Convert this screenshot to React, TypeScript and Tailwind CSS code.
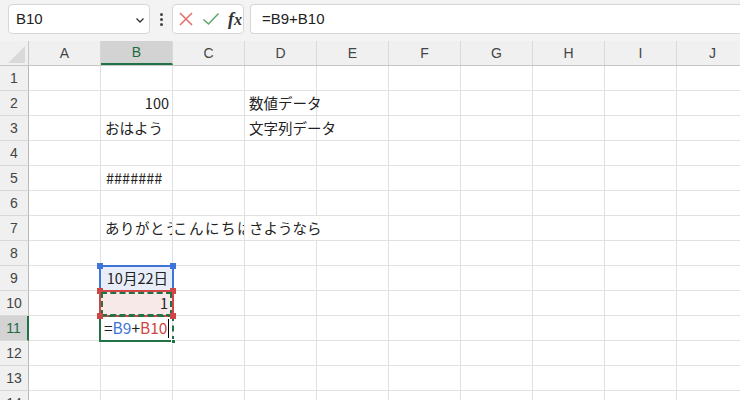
import React from "react";

const COLS = ["A", "B", "C", "D", "E", "F", "G", "H", "I", "J"];
const ROWS = Array.from({ length: 14 }, (_, i) => i + 1);

const cellFont = { fontFamily: '"Noto Sans CJK JP", "Noto Sans", sans-serif' };

function isOverflow(r: number, c: string) {
  return c === "D" && (r === 2 || r === 3 || r === 7);
}

function cellContent(r: number, c: string): React.ReactNode {
  if (r === 2 && c === "B") return <div className="w-full text-right pr-[3px]">100</div>;
  if (r === 2 && c === "D") return <div className="pl-[4px] whitespace-nowrap relative z-10">数値データ</div>;
  if (r === 3 && c === "B") return <div className="pl-[4px] whitespace-nowrap">おはよう</div>;
  if (r === 3 && c === "D") return <div className="pl-[4px] whitespace-nowrap relative z-10">文字列データ</div>;
  if (r === 5 && c === "B") return <div className="pl-[5px] whitespace-nowrap">#######</div>;
  if (r === 7 && c === "B") return <div className="pl-[4px] whitespace-nowrap overflow-hidden w-full tracking-[0.5px]">ありがとう</div>;
  if (r === 7 && c === "C") return <div className="whitespace-nowrap overflow-hidden w-full tracking-[1.5px]">こんにちは</div>;
  if (r === 7 && c === "D")
    return (
      <div className="pl-[4px] pr-[2px] whitespace-nowrap relative z-10 bg-white leading-[24px]">さようなら</div>
    );
  if (r === 9 && c === "B") return <div className="w-full text-right pr-[4px] whitespace-nowrap">10月22日</div>;
  if (r === 10 && c === "B") return <div className="w-full text-right pr-[4px]">1</div>;
  if (r === 11 && c === "B")
    return (
      <div className="pl-[3px] whitespace-nowrap flex items-center text-[15.5px]">
        <span className="text-[#222]">=</span>
        <span className="text-[#3f74d8]">B9</span>
        <span className="text-[#222]">+</span>
        <span className="text-[#d04545]">B10</span>
        <span className="inline-block w-[1px] h-[19px] bg-black ml-[1px]" />
      </div>
    );
  return null;
}

function cellBg(r: number, c: string) {
  if (r === 9 && c === "B") return "bg-[#e8eef9]";
  if (r === 10 && c === "B") return "bg-[#f8e9e9]";
  return "bg-white";
}

export default function App() {
  return (
    <div className="relative w-[740px] h-[400px] overflow-hidden bg-white" style={{ fontFamily: '"Liberation Sans", "Noto Sans CJK JP", sans-serif' }}>
      {/* Formula bar */}
      <div className="h-[41px] bg-[#f3f3f3] flex items-start pt-[4px] pl-[8px]">
        <div className="w-[142px] h-[30px] bg-white border border-[#d6d6d6] rounded-[4px] flex items-center justify-between pl-[7px] pr-[3px]">
          <span className="text-[15px] text-[#222]">B10</span>
          <svg width="12" height="12" viewBox="0 0 12 12" className="mt-[1px]">
            <path d="M2.5 4.5 L6 8 L9.5 4.5" fill="none" stroke="#333" strokeWidth="1.3" />
          </svg>
        </div>
        <div className="w-[22px] h-[30px] flex flex-col items-center justify-center gap-[2px]">
          <span className="w-[3px] h-[3px] bg-[#444] rounded-full" />
          <span className="w-[3px] h-[3px] bg-[#444] rounded-full" />
          <span className="w-[3px] h-[3px] bg-[#444] rounded-full" />
        </div>
        <div className="w-[72px] h-[30px] bg-white border border-[#d6d6d6] rounded-[4px] flex items-center pl-[5px] gap-[8px]">
          <svg width="16" height="16" viewBox="0 0 16 16">
            <path d="M2 2 L14 14 M14 2 L2 14" stroke="#e36b6b" strokeWidth="1.5" fill="none" />
          </svg>
          <svg width="18" height="16" viewBox="0 0 18 16">
            <path d="M1.5 8.5 L6.5 13 L16.5 2.5" stroke="#5aa86a" strokeWidth="1.5" fill="none" />
          </svg>
          <span className="text-[18px] italic text-[#333] leading-none" style={{ fontFamily: '"Liberation Serif", "DejaVu Serif", serif' }}>
            <span className="font-semibold">f</span><span className="text-[16px] font-semibold">x</span>
          </span>
        </div>
        <div className="ml-[6px] flex-1 h-[30px] bg-white border border-[#d6d6d6] rounded-l-[4px] border-r-0 flex items-center pl-[11px]">
          <span className="text-[15px] text-[#222]">=B9+B10</span>
        </div>
      </div>

      {/* Column headers */}
      <div className="flex h-[25px] bg-[#f0f0f0] border-b border-[#c6c6c6]">
        <div className="w-[29px] shrink-0 relative border-r border-[#c6c6c6]">
          <div className="absolute right-[3px] bottom-[2px] w-0 h-0 border-l-[17px] border-l-transparent border-b-[17px] border-b-[#d9d9d9]" />
        </div>
        {COLS.map((c) => (
          <div
            key={c}
            className={
              "w-[72px] shrink-0 flex items-center justify-center text-[14px] border-r border-[#d8d8d8] " +
              (c === "B" ? "bg-[#d3d3d3] text-[#1e6b40] border-b-2 border-b-[#217346]" : "text-[#444]")
            }
          >
            {c}
          </div>
        ))}
      </div>

      {/* Rows */}
      {ROWS.map((r) => (
        <div key={r} className="flex h-[25px]">
          <div
            className={
              "w-[29px] shrink-0 flex items-center justify-center text-[14px] border-b border-[#d8d8d8] " +
              (r === 11 ? "bg-[#d3d3d3] text-[#1e6b40] border-r-2 border-r-[#217346]" : "bg-[#f0f0f0] text-[#444] border-r border-r-[#b8b8b8]")
            }
          >
            {r}
          </div>
          {COLS.map((c) => (
            <div
              key={c}
              className={
                "w-[72px] shrink-0 flex items-center text-[14.5px] text-[#222] border-r border-b border-[#e1e1e1] " +
                cellBg(r, c) +
                (isOverflow(r, c) ? " overflow-visible" : " overflow-hidden")
              }
              style={cellFont}
            >
              {cellContent(r, c)}
            </div>
          ))}
        </div>
      ))}

      {/* Reference highlight overlays */}
      {/* B9 blue */}
      <div className="absolute left-[99px] top-[265px] w-[75px] h-[27px] border-2 border-[#3f74d8] pointer-events-none" />
      <div className="absolute left-[97px] top-[263px] w-[6px] h-[6px] bg-[#3f74d8]" />
      <div className="absolute left-[170px] top-[263px] w-[6px] h-[6px] bg-[#3f74d8]" />
      {/* B10 red */}
      <div className="absolute left-[99px] top-[290px] w-[75px] h-[27px] border-2 border-[#d04545] pointer-events-none" />
      <div className="absolute left-[97px] top-[288px] w-[6px] h-[6px] bg-[#d04545]" />
      <div className="absolute left-[170px] top-[288px] w-[6px] h-[6px] bg-[#d04545]" />
      {/* green dashed marquee */}
      <div className="absolute left-[101px] top-[292px] w-[71px] h-[24px] border-2 border-dashed border-[#217346] pointer-events-none" />
      {/* B11 active */}
      <div className="absolute left-[99px] top-[315px] w-[75px] h-[27px] border-2 border-[#217346] pointer-events-none" style={{ borderTopStyle: "dashed", borderRightStyle: "dashed" }} />
      <div className="absolute left-[97px] top-[313px] w-[6px] h-[6px] bg-[#d04545]" />
      <div className="absolute left-[170px] top-[313px] w-[6px] h-[6px] bg-[#d04545]" />
      <div className="absolute left-[171px] top-[339px] w-[5px] h-[5px] bg-[#217346] border border-white" />
    </div>
  );
}
